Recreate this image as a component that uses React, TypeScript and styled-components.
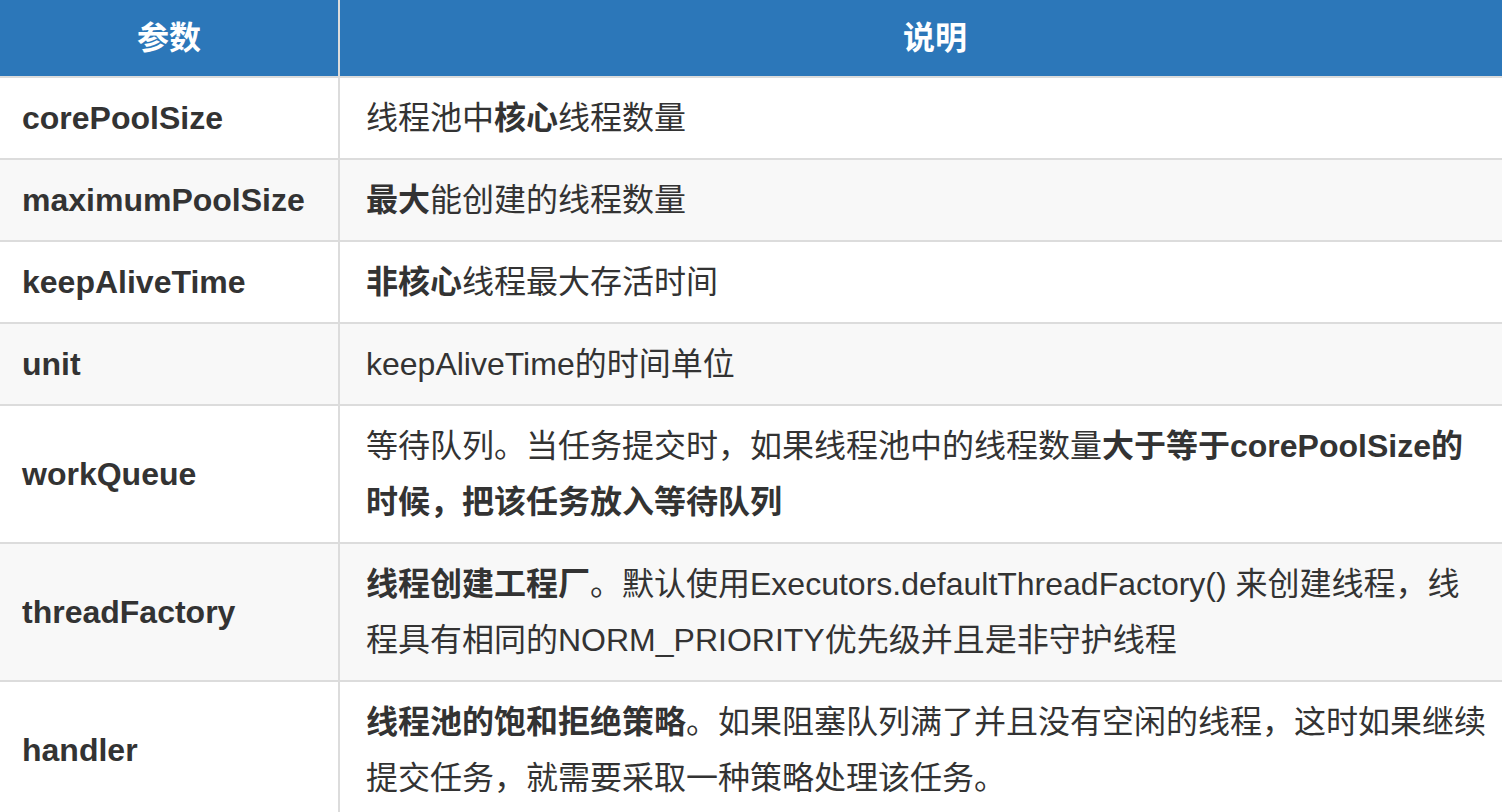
import React from 'react';
import styled, { createGlobalStyle } from 'styled-components';

const GlobalStyle = createGlobalStyle`
  html, body {
    margin: 0;
    padding: 0;
    background: #ffffff;
    overflow: hidden;
  }
  body {
    font-family: "Liberation Sans", "Noto Sans CJK SC", sans-serif;
    color: #333333;
  }
`;

const Table = styled.table`
  width: 1532px;
  border-collapse: collapse;
  table-layout: fixed;
  font-size: 32px;
  line-height: 56px;
`;

const HeadCell = styled.th`
  background: #2c77b9;
  color: #ffffff;
  font-weight: 700;
  text-align: center;
  padding: 10px 26px;
  border: 2px solid #dcdcdc;
  border-top: none;
  border-left: none;
`;

const Row = styled.tr<{ $striped: boolean }>`
  background: ${(p) => (p.$striped ? '#f8f8f8' : '#ffffff')};
`;

const NameCell = styled.td`
  font-weight: 700;
  padding: 12px 22px;
  vertical-align: middle;
  border-right: 2px solid #dcdcdc;
  border-bottom: 2px solid #dcdcdc;
`;

const DescCell = styled.td`
  padding: 12px 26px;
  vertical-align: middle;
  border-bottom: 2px solid #dcdcdc;
`;

const Strong = styled.b`
  font-weight: 700;
`;

type Param = { name: string; desc: React.ReactNode };

const params: Param[] = [
  { name: 'corePoolSize', desc: <>线程池中<Strong>核心</Strong>线程数量</> },
  { name: 'maximumPoolSize', desc: <><Strong>最大</Strong>能创建的线程数量</> },
  { name: 'keepAliveTime', desc: <><Strong>非核心</Strong>线程最大存活时间</> },
  { name: 'unit', desc: <>keepAliveTime的时间单位</> },
  {
    name: 'workQueue',
    desc: (
      <>
        等待队列。当任务提交时，如果线程池中的线程数量<Strong>大于等于corePoolSize的<br />时候，把该任务放入等待队列</Strong>
      </>
    ),
  },
  {
    name: 'threadFactory',
    desc: (
      <>
        <Strong>线程创建工程厂</Strong>。默认使用Executors.defaultThreadFactory() 来创建线程，线<br />程具有相同的NORM_PRIORITY优先级并且是非守护线程
      </>
    ),
  },
  {
    name: 'handler',
    desc: (
      <>
        <Strong>线程池的饱和拒绝策略</Strong>。如果阻塞队列满了并且没有空闲的线程，这时如果继续<br />提交任务，就需要采取一种策略处理该任务。
      </>
    ),
  },
];

export default function App() {
  return (
    <>
      <GlobalStyle />
      <Table>
        <colgroup>
          <col style={{ width: 339 }} />
          <col />
        </colgroup>
        <thead>
          <tr>
            <HeadCell>参数</HeadCell>
            <HeadCell>说明</HeadCell>
          </tr>
        </thead>
        <tbody>
          {params.map((p, i) => (
            <Row key={p.name} $striped={i % 2 === 1}>
              <NameCell>{p.name}</NameCell>
              <DescCell>{p.desc}</DescCell>
            </Row>
          ))}
        </tbody>
      </Table>
    </>
  );
}
